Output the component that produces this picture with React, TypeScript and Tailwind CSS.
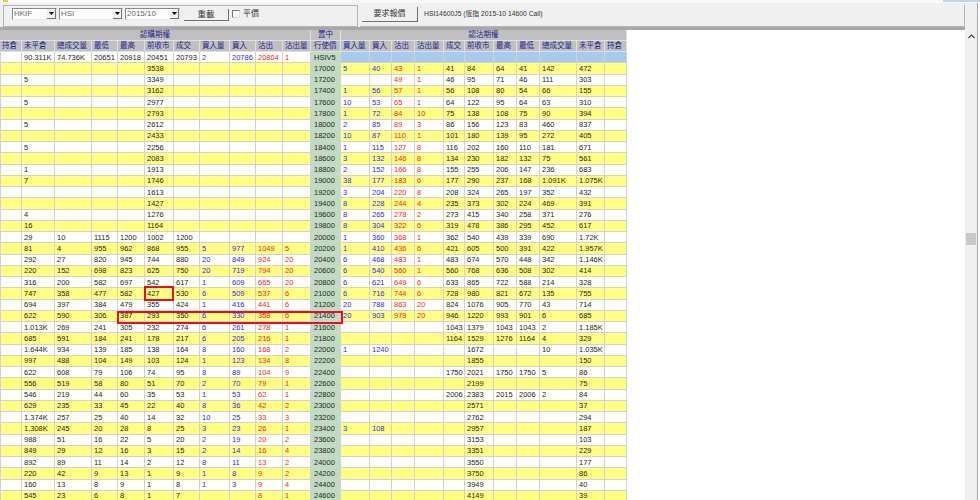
const FONT = 'font-["Liberation_Sans","Noto_Sans_CJK_TC",sans-serif]';

const leftHead = ['持倉', '未平倉', '總成交量', '最低', '最高', '前收市', '成交', '買入量', '買入', '沽出', '沽出量'];
const rightHead = ['買入量', '買入', '沽出', '沽出量', '成交', '前收市', '最高', '最低', '總成交量', '未平倉', '持倉'];

// call: open-int, volume, low, high, prev, last, bidQty, bid, ask, askQty | strike | bidQty, bid, ask, askQty, last, prev, high, low, volume, open-int
const rows = [
  ',,,,3538,,,,,|17000|5,40,43,1,41,84,64,41,142,472',
  '5,,,,3349,,,,,|17200|,,49,1,46,95,71,46,111,303',
  ',,,,3162,,,,,|17400|1,56,57,1,56,108,80,54,66,155',
  '5,,,,2977,,,,,|17600|10,53,65,1,64,122,95,64,63,310',
  ',,,,2793,,,,,|17800|1,72,84,10,75,138,108,75,90,394',
  '5,,,,2612,,,,,|18000|2,85,89,3,86,156,123,83,460,837',
  ',,,,2433,,,,,|18200|10,87,110,1,101,180,139,95,272,405',
  '5,,,,2256,,,,,|18400|1,115,127,8,116,202,160,110,181,671',
  ',,,,2083,,,,,|18600|3,132,146,8,134,230,182,132,75,561',
  '1,,,,1913,,,,,|18800|2,152,166,8,155,255,206,147,236,683',
  '7,,,,1746,,,,,|19000|38,177,183,6,177,290,237,168,1.091K,1.075K',
  ',,,,1613,,,,,|19200|3,204,220,8,208,324,265,197,352,432',
  ',,,,1427,,,,,|19400|8,228,244,4,235,373,302,224,469,391',
  '4,,,,1276,,,,,|19600|8,265,278,2,273,415,340,258,371,276',
  '16,,,,1164,,,,,|19800|8,304,322,6,319,478,386,295,452,617',
  '29,10,1115,1200,1002,1200,,,,|20000|1,360,368,1,362,540,439,339,690,1.72K',
  '81,4,955,962,868,955,5,977,1049,5|20200|1,410,436,6,421,605,500,391,422,1.957K',
  '292,27,820,945,744,880,20,849,924,20|20400|6,468,483,1,483,674,570,448,342,1.146K',
  '220,152,698,823,625,750,20,719,794,20|20600|6,540,560,1,560,768,636,508,302,414',
  '316,200,582,697,542,617,1,609,665,20|20800|6,621,649,6,633,865,722,588,214,328',
  '747,358,477,582,427,530,6,509,537,6|21000|6,716,744,6,728,980,821,672,135,755',
  '694,397,384,479,355,424,1,416,441,6|21200|20,788,863,20,824,1076,905,770,43,714',
  '622,590,306,387,293,350,6,330,358,6|21400|20,903,978,20,946,1220,993,901,6,685',
  '1.013K,269,241,305,232,274,6,261,278,1|21600|,,,,1043,1379,1043,1043,2,1.185K',
  '685,591,184,241,178,217,6,205,216,1|21800|,,,,1164,1529,1276,1164,4,329',
  '1.644K,934,139,185,138,164,8,160,168,2|22000|1,1240,,,,1672,,,10,1.035K',
  '997,488,104,149,103,124,1,123,134,8|22200|,,,,,1855,,,,150',
  '622,608,79,106,74,95,8,89,104,9|22400|,,,,1750,2021,1750,1750,5,86',
  '556,519,58,80,51,70,2,70,79,1|22600|,,,,,2199,,,,75',
  '546,219,44,60,35,53,1,53,62,1|22800|,,,,2006,2383,2015,2006,2,84',
  '629,235,33,45,22,40,8,36,42,2|23000|,,,,,2571,,,,37',
  '1.374K,257,25,40,14,32,10,25,33,3|23200|,,,,,2762,,,,294',
  '1.308K,245,20,28,8,25,3,23,26,1|23400|3,108,,,,2957,,,,187',
  '988,51,16,22,5,20,2,19,20,2|23600|,,,,,3153,,,,103',
  '849,29,12,16,3,15,2,14,16,4|23800|,,,,,3351,,,,229',
  '892,89,11,14,2,12,8,11,13,2|24000|,,,,,3550,,,,177',
  '220,42,9,13,1,9,1,8,9,2|24200|,,,,,3750,,,,86',
  '160,13,8,9,1,8,1,3,9,4|24400|,,,,,3949,,,,40',
  '545,23,6,8,1,7,,,8,1|24600|,,,,,4149,,,,39',
].map((r) => {
  const [l, s, rr] = r.split('|');
  return { left: ['', ...l.split(',')], strike: s, right: [...rr.split(','), ''] };
});

const GRID = 'grid h-[11.25px] grid-cols-[22px_33px_37px_26px_27px_29px_26px_30px_26px_27px_28px_30px_29px_22px_23px_29px_21px_29px_23px_23px_37px_28px_22px]';

function colorLeft(i: number) {
  if (i === 7 || i === 8) return 'text-[#2a2aff]';
  if (i === 9 || i === 10) return 'text-[#ff2020]';
  return 'text-[#262626]';
}
function colorRight(i: number) {
  if (i === 0 || i === 1) return 'text-[#2a2aff]';
  if (i === 2 || i === 3) return 'text-[#ff2020]';
  return 'text-[#262626]';
}

function Cell({ text, className = '' }: { text: string; className?: string }) {
  return (
    <div className={`flex items-center overflow-hidden whitespace-nowrap border-b border-r border-[#d2d2d2] pl-[2px] leading-none ${className}`}>
      {text}
    </div>
  );
}

function Head({ text, className = '' }: { text: string; className?: string }) {
  return (
    <div className={`flex items-center overflow-hidden whitespace-nowrap border-b border-r border-[#e0e0e0] bg-[#c0c0c0] pl-[2px] leading-none text-[#23238e] ${className}`}>
      {text}
    </div>
  );
}

function Dropdown({ label, width }: { label: string; width: string }) {
  return (
    <div className={`flex h-[12px] items-center justify-between border border-b-[#e8e8e8] border-l-[#8a8a8a] border-r-[#e8e8e8] border-t-[#8a8a8a] bg-white pl-[1px] ${width}`}>
      <span className="text-[8px] leading-none text-[#666]">{label}</span>
      <span className="flex h-[10px] w-[9px] items-center justify-center border-b border-r border-[#777] bg-[#f0f0f0]">
        <svg width="5" height="3" viewBox="0 0 5 3">
          <path d="M0 0h5L2.5 3z" fill="#000" />
        </svg>
      </span>
    </div>
  );
}

export default function App() {
  return (
    <div className={`flex h-[500px] w-[980px] flex-col overflow-hidden bg-white text-[7.5px] ${FONT}`}>
      <div className="flex h-[3px] shrink-0 justify-between bg-[#fafafa]">
        <div className="ml-[3px] h-[2px] w-[5px] bg-[#e8d040]" />
        <div className="h-[2px] w-[37px] bg-[#c4d4e6]" />
      </div>
      <div className="flex min-h-0 flex-1">
        <div className="flex w-[965px] shrink-0 flex-col">
          <div className="flex h-[24px] shrink-0 items-start gap-[2px] bg-[#f0f0f0] pl-[3px] pt-[2px]">
            <div className="flex h-[22px] w-[355px] items-start border border-[#b4b4b4] pl-[8px] pt-[2px]">
              <Dropdown label="HKIF" width="w-[45px]" />
              <div className="w-[2px]" />
              <Dropdown label="HSI" width="w-[64px]" />
              <div className="w-[2px]" />
              <Dropdown label="2015/10" width="w-[55px]" />
              <button className="ml-[4px] mt-[1px] flex h-[12px] w-[45px] items-center justify-center border-b border-r border-[#707070] bg-[#f0f0f0] text-[8.5px] leading-none text-[#333]">
                重載
              </button>
              <span className="ml-[3px] mt-[2px] h-[8px] w-[8px] border border-b-[#ddd] border-l-[#777] border-r-[#ddd] border-t-[#777] bg-white" />
              <span className="ml-[3px] mt-[2px] text-[8px] leading-[8px] text-[#333]">平價</span>
            </div>
            <div className="flex h-[22px] flex-1 items-center border-b border-r border-[#b4b4b4] pb-[3px] pl-[2px]">
              <button className="flex h-[15px] w-[56px] items-center justify-center border-b border-r border-[#707070] bg-[#f0f0f0] text-[8px] leading-none text-[#333]">
                要求報價
              </button>
              <span className="ml-[6px] text-[6.8px] leading-none text-[#333]">HSI14600J5 (恆指 2015-10 14600 Call)</span>
            </div>
          </div>
          <div className="h-[2.65px] shrink-0 bg-[#a8a8a8]" />
          <div className="relative w-[627px]">
            <div className="flex h-[11.25px] text-[#23238e]">
              <div className="flex w-[311px] items-center justify-center border-b border-r border-[#e0e0e0] bg-[#c0c0c0] leading-none">認購期權</div>
              <div className="flex w-[30px] items-center justify-center border-b border-r border-[#e0e0e0] bg-[#c0c0c0] leading-none">置中</div>
              <div className="flex w-[286px] items-center justify-center border-b border-r border-[#e0e0e0] bg-[#c0c0c0] leading-none">認沽期權</div>
            </div>
            <div className={GRID}>
              {leftHead.map((h, i) => <Head key={i} text={h} />)}
              <Head text="行使價" className="pl-[3px]" />
              {rightHead.map((h, i) => <Head key={i} text={h} />)}
            </div>
            <div className={GRID}>
              {['', '90.311K', '74.736K', '20651', '20918', '20451', '20793', '2', '20786', '20804', '1'].map((t, i) => (
                <Cell key={i} text={t} className={`bg-white ${colorLeft(i)} ${i === 0 ? 'border-l' : ''}`} />
              ))}
              <Cell text="HSIV5" className="bg-[#c0dcc0] pl-[3px] text-[#262626]" />
              {rightHead.map((_, i) => <Cell key={i} text="" className="bg-[#a6caf0]" />)}
            </div>
            {rows.map((r, idx) => {
              const bg = idx % 2 === 0 ? 'bg-[#ffff80]' : 'bg-white';
              return (
                <div key={r.strike} className={GRID}>
                  {r.left.map((t, i) => <Cell key={i} text={t} className={`${bg} ${colorLeft(i)} ${i === 0 ? 'border-l' : ''}`} />)}
                  <Cell text={r.strike} className="bg-[#c0dcc0] pl-[3px] text-[#262626]" />
                  {r.right.map((t, i) => <Cell key={i} text={t} className={`${bg} ${colorRight(i)}`} />)}
                </div>
              );
            })}
            <div className="absolute left-[144px] top-[256.5px] h-[15px] w-[30px] border-2 border-[#ee0a1c]" />
            <div className="absolute left-[117px] top-[281px] h-[13px] w-[226px] border-2 border-[#ee0a1c]" />
          </div>
        </div>
        <div className="flex w-[12px] shrink-0 flex-col bg-[#f0f0f0]">
          <div className="h-[27px] shrink-0" />
          <div className="flex h-[12px] shrink-0 items-center justify-center">
            <svg width="7" height="5" viewBox="0 0 7 5">
              <path d="M0.5 4L3.5 1L6.5 4" fill="none" stroke="#444" strokeWidth="1.2" />
            </svg>
          </div>
          <div className="h-[191px] shrink-0" />
          <div className="ml-[1px] h-[12px] w-[10px] shrink-0 bg-[#c8c8c8]" />
        </div>
        <div className="w-[1px] shrink-0 bg-[#a8a8a8]" />
        <div className="w-[2px] shrink-0 bg-white" />
      </div>
    </div>
  );
}
